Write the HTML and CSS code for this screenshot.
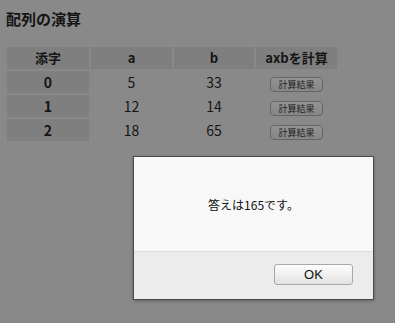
FILE: index.html
```html
<!DOCTYPE html>
<html lang="ja">
<head>
<meta charset="UTF-8">
<title>配列の演算</title>
<link rel="stylesheet" href="styles.css">
</head>
<body>

<h1 class="title">配列の演算</h1>

<table class="calc">
<tr>
<th class="c-idx">添字</th>
<th class="c-a">a</th>
<th class="c-b">b</th>
<th class="c-op">axbを計算</th>
</tr>
<tr>
<td class="idx">0</td>
<td>5</td>
<td>33</td>
<td><button class="calc-btn">計算結果</button></td>
</tr>
<tr>
<td class="idx">1</td>
<td>12</td>
<td>14</td>
<td><button class="calc-btn">計算結果</button></td>
</tr>
<tr>
<td class="idx">2</td>
<td>18</td>
<td>65</td>
<td><button class="calc-btn">計算結果</button></td>
</tr>
</table>

<div class="dialog">
<div class="dialog-body">答えは165です。</div>
<div class="dialog-foot">
<button class="ok">OK</button>
</div>
</div>

</body>
</html>
```

FILE: styles.css
```css
body {
    margin: 0;
    padding: 9px 5px;
    background-color: #898989;
    font-family: "Noto Sans CJK JP", "Noto Sans", sans-serif;
    color: #151515;
    position: relative;
    height: 305px;
    overflow: hidden;
}

.title {
    margin: 0 0 0 1px;
    font-size: 15px;
    line-height: 20px;
    font-weight: bold;
}

.calc {
    margin-top: 16px;
    border-spacing: 2px;
    font-size: 14px;
}

.calc th {
    background-color: #7f7f7f;
    height: 22px;
    padding: 0;
    font-size: 13px;
    line-height: 22px;
    font-weight: bold;
}

.calc td {
    height: 22px;
    padding: 0;
    text-align: center;
    line-height: 22px;
}

.calc td.idx {
    background-color: #7f7f7f;
    font-weight: bold;
}

.c-idx { width: 82px; }
.c-a { width: 81px; }
.c-b { width: 80px; }
.c-op { width: 81px; }

.calc-btn {
    width: 53px;
    height: 15px;
    padding: 0;
    font-family: "Noto Sans CJK JP", sans-serif;
    font-size: 9px;
    line-height: 13px;
    color: #222;
    background: linear-gradient(#939393, #858585);
    border: 1px solid #666;
    border-radius: 4px;
    vertical-align: middle;
}

.dialog {
    position: absolute;
    left: 133px;
    top: 156px;
    width: 239px;
    height: 142px;
    border: 1px solid #4a4a4a;
    background-color: #ececec;
    display: flex;
    flex-direction: column;
    box-shadow: 0 1px 3px rgba(0, 0, 0, 0.3);
}

.dialog-body {
    height: 94px;
    background-color: #f8f8f8;
    border-bottom: 1px solid #dcdcdc;
    display: flex;
    justify-content: center;
    align-items: center;
    font-size: 12px;
    color: #111;
}

.dialog-foot {
    flex: 1;
    display: flex;
    justify-content: flex-end;
    align-items: flex-start;
    padding: 12px 20px 0 0;
}

.ok {
    width: 79px;
    height: 21px;
    padding: 0;
    font-family: "Liberation Sans", Arial, sans-serif;
    font-size: 13px;
    color: #111;
    background: linear-gradient(#fdfdfd, #e2e2e2);
    border: 1px solid #a8a8a8;
    border-radius: 3px;
}
```
